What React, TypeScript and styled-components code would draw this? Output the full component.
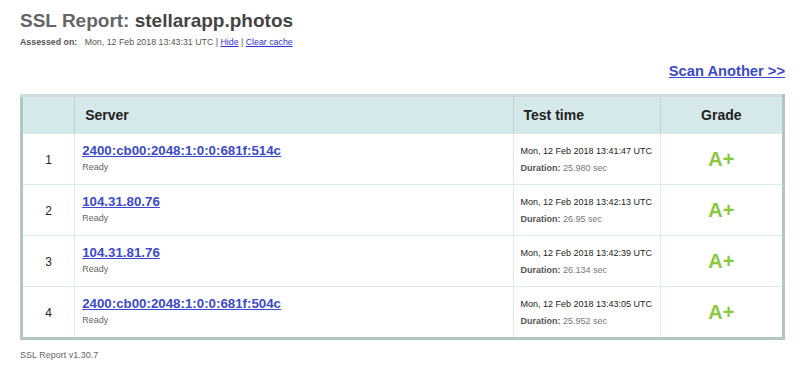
import React from "react";
import styled, { createGlobalStyle } from "styled-components";

const GlobalStyle = createGlobalStyle`
  body {
    margin: 0;
    background: #ffffff;
    font-family: "Liberation Sans", Arial, sans-serif;
    color: #222;
  }
`;

const Page = styled.div`
  padding: 10px 15px 0 20px;
`;

const Title = styled.h1`
  margin: 0;
  font-size: 19px;
  line-height: 22px;
  font-weight: bold;
  color: #666;
`;

const Domain = styled.span`
  color: #444;
`;

const Assessed = styled.div`
  margin-top: 5px;
  font-size: 8.8px;
  color: #555;
`;

const Label = styled.b`
  margin-right: 5px;
`;

const SmallLink = styled.a`
  color: #3333cc;
  text-decoration: underline;
`;

const ScanRow = styled.div`
  display: flex;
  justify-content: flex-end;
  margin-top: 16px;
`;

const ScanLink = styled.a`
  font-size: 14.7px;
  font-weight: bold;
  color: #3b49c9;
  text-decoration: underline;
`;

const Table = styled.table`
  margin-top: 15px;
  width: 765px;
  border-collapse: collapse;
  border: 3px solid #b3c6c6;
  border-top-color: #d2dddd;
`;

const HeadCell = styled.th<{ align?: string }>`
  background: #d6e9ea;
  height: 36px;
  padding: 0 10px;
  font-size: 14px;
  font-weight: bold;
  color: #222;
  text-align: ${(p) => p.align || "left"};
  border-left: 1px solid #bdd3d3;
  &:first-child {
    border-left: none;
  }
`;

const Row = styled.tr`
  border-top: 1px solid #dcebeb;
`;

const Cell = styled.td<{ align?: string }>`
  height: 50px;
  padding: 0 7px;
  vertical-align: middle;
  white-space: nowrap;
  text-align: ${(p) => p.align || "left"};
  border-left: 1px solid #dcebeb;
  &:first-child {
    border-left: none;
  }
`;

const ServerCell = styled(Cell)`
  height: 46px;
  padding-bottom: 4px;
`;

const Num = styled.span`
  font-size: 12px;
  color: #222;
`;

const ServerLink = styled.a`
  display: block;
  font-size: 13.3px;
  font-weight: bold;
  color: #3b49c9;
  text-decoration: underline;
`;

const Status = styled.div`
  margin-top: 4px;
  font-size: 9px;
  color: #666;
`;

const When = styled.div`
  font-size: 9px;
  color: #222;
`;

const Duration = styled.div`
  margin-top: 7px;
  font-size: 9px;
  color: #777;
  b {
    color: #555;
  }
`;

const Grade = styled.span`
  font-size: 20px;
  font-weight: bold;
  color: #8ac83c;
`;

const Footer = styled.div`
  margin-top: 10px;
  font-size: 9px;
  color: #666;
`;

const rows = [
  { server: "2400:cb00:2048:1:0:0:681f:514c", time: "Mon, 12 Feb 2018 13:41:47 UTC", duration: "25.980 sec" },
  { server: "104.31.80.76", time: "Mon, 12 Feb 2018 13:42:13 UTC", duration: "26.95 sec" },
  { server: "104.31.81.76", time: "Mon, 12 Feb 2018 13:42:39 UTC", duration: "26.134 sec" },
  { server: "2400:cb00:2048:1:0:0:681f:504c", time: "Mon, 12 Feb 2018 13:43:05 UTC", duration: "25.952 sec" },
];

export default function App() {
  return (
    <Page>
      <GlobalStyle />
      <Title>
        SSL Report: <Domain>stellarapp.photos</Domain>
      </Title>
      <Assessed>
        <Label>Assessed on:</Label> Mon, 12 Feb 2018 13:43:31 UTC |{" "}
        <SmallLink href="#">Hide</SmallLink> | <SmallLink href="#">Clear cache</SmallLink>
      </Assessed>
      <ScanRow>
        <ScanLink href="#">Scan Another &gt;&gt;</ScanLink>
      </ScanRow>
      <Table>
        <colgroup>
          <col style={{ width: 53 }} />
          <col style={{ width: 437 }} />
          <col style={{ width: 146 }} />
          <col style={{ width: 123 }} />
        </colgroup>
        <thead>
          <tr>
            <HeadCell />
            <HeadCell>Server</HeadCell>
            <HeadCell>Test time</HeadCell>
            <HeadCell align="center">Grade</HeadCell>
          </tr>
        </thead>
        <tbody>
          {rows.map((r, i) => (
            <Row key={i}>
              <Cell align="center">
                <Num>{i + 1}</Num>
              </Cell>
              <ServerCell>
                <ServerLink href="#">{r.server}</ServerLink>
                <Status>Ready</Status>
              </ServerCell>
              <Cell>
                <When>{r.time}</When>
                <Duration>
                  <b>Duration:</b> {r.duration}
                </Duration>
              </Cell>
              <Cell align="center">
                <Grade>A+</Grade>
              </Cell>
            </Row>
          ))}
        </tbody>
      </Table>
      <Footer>SSL Report v1.30.7</Footer>
    </Page>
  );
}
